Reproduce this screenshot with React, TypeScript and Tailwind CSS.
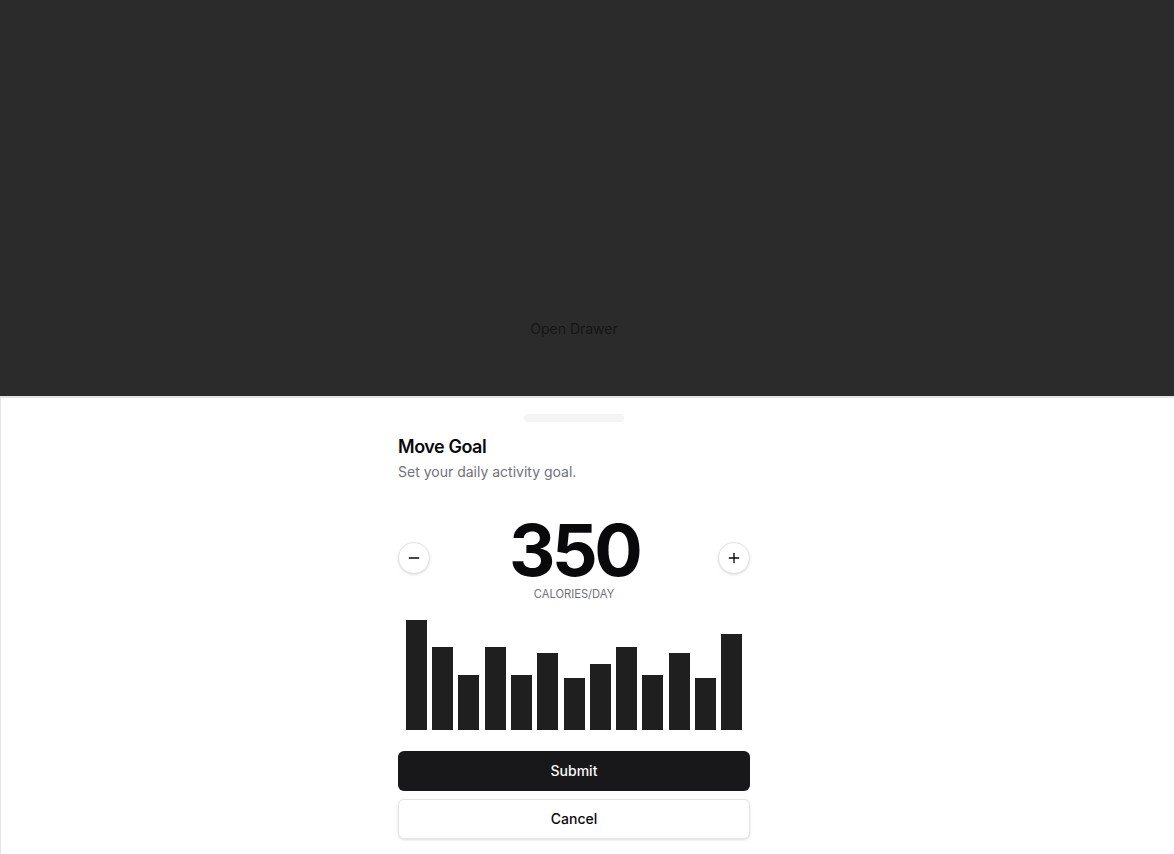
import React from "react";
import { Minus, Plus } from "lucide-react";

// Daily goal values shown in the bar chart
const data = [400, 300, 200, 300, 200, 278, 189, 239, 300, 200, 278, 189, 349];
const maxValue = 400;
const plotHeight = 110;

const GoalChart = () => {
  return (
    <div className="mt-3 h-[120px] flex items-end px-[5px] py-[5px]">
      {data.map((value, i) => (
        <div key={i} className="flex-1 flex justify-center items-end h-full">
          <div
            className="w-[80%] bg-[#1f1f1f]"
            style={{ height: `${(value / maxValue) * plotHeight}px` }}
          />
        </div>
      ))}
    </div>
  );
};

export default function App() {
  return (
    <div className="h-[854px] overflow-hidden flex flex-col bg-[#2b2b2b] font-['Inter',sans-serif]">
      {/* Page behind the overlay */}
      <div className="h-[396px] shrink-0 flex justify-center pr-[26px] pt-[309px]">
        <div className="h-10 px-4 flex items-center text-sm text-[#161616]">
          Open Drawer
        </div>
      </div>

      {/* Drawer */}
      <div className="flex-1 flex flex-col bg-white border-l border-t-2 border-[#e4e4e7] pr-[27px]">
        <div className="mx-auto mt-4 h-2 w-[100px] rounded-full bg-[#f4f4f5]" />
        <div className="mx-auto w-full max-w-sm">
          <div className="flex flex-col gap-1.5 p-4">
            <h2 className="text-lg font-semibold leading-none tracking-tight text-[#09090b]">Move Goal</h2>
            <p className="text-sm text-[#71717a]">Set your daily activity goal.</p>
          </div>
          <div className="p-4 pb-0">
            <div className="flex items-center justify-center gap-2">
              <button className="h-8 w-8 shrink-0 rounded-full border border-[#e4e4e7] bg-white shadow-sm flex items-center justify-center text-[#09090b]">
                <Minus className="h-4 w-4" />
              </button>
              <div className="flex-1 text-center">
                <div className="text-7xl leading-none font-bold tracking-tighter text-[#09090b]">350</div>
                <div className="text-[0.70rem] uppercase text-[#71717a]">Calories/day</div>
              </div>
              <button className="h-8 w-8 shrink-0 rounded-full border border-[#e4e4e7] bg-white shadow-sm flex items-center justify-center text-[#09090b]">
                <Plus className="h-4 w-4" />
              </button>
            </div>
            <GoalChart />
          </div>
          <div className="flex flex-col gap-2 p-4">
            <button className="h-10 rounded-md bg-[#18181b] text-sm font-medium text-[#fafafa]">Submit</button>
            <button className="h-10 rounded-md border border-[#e4e4e7] bg-white text-sm font-medium text-[#09090b] shadow-sm">Cancel</button>
          </div>
        </div>
      </div>
    </div>
  );
}
